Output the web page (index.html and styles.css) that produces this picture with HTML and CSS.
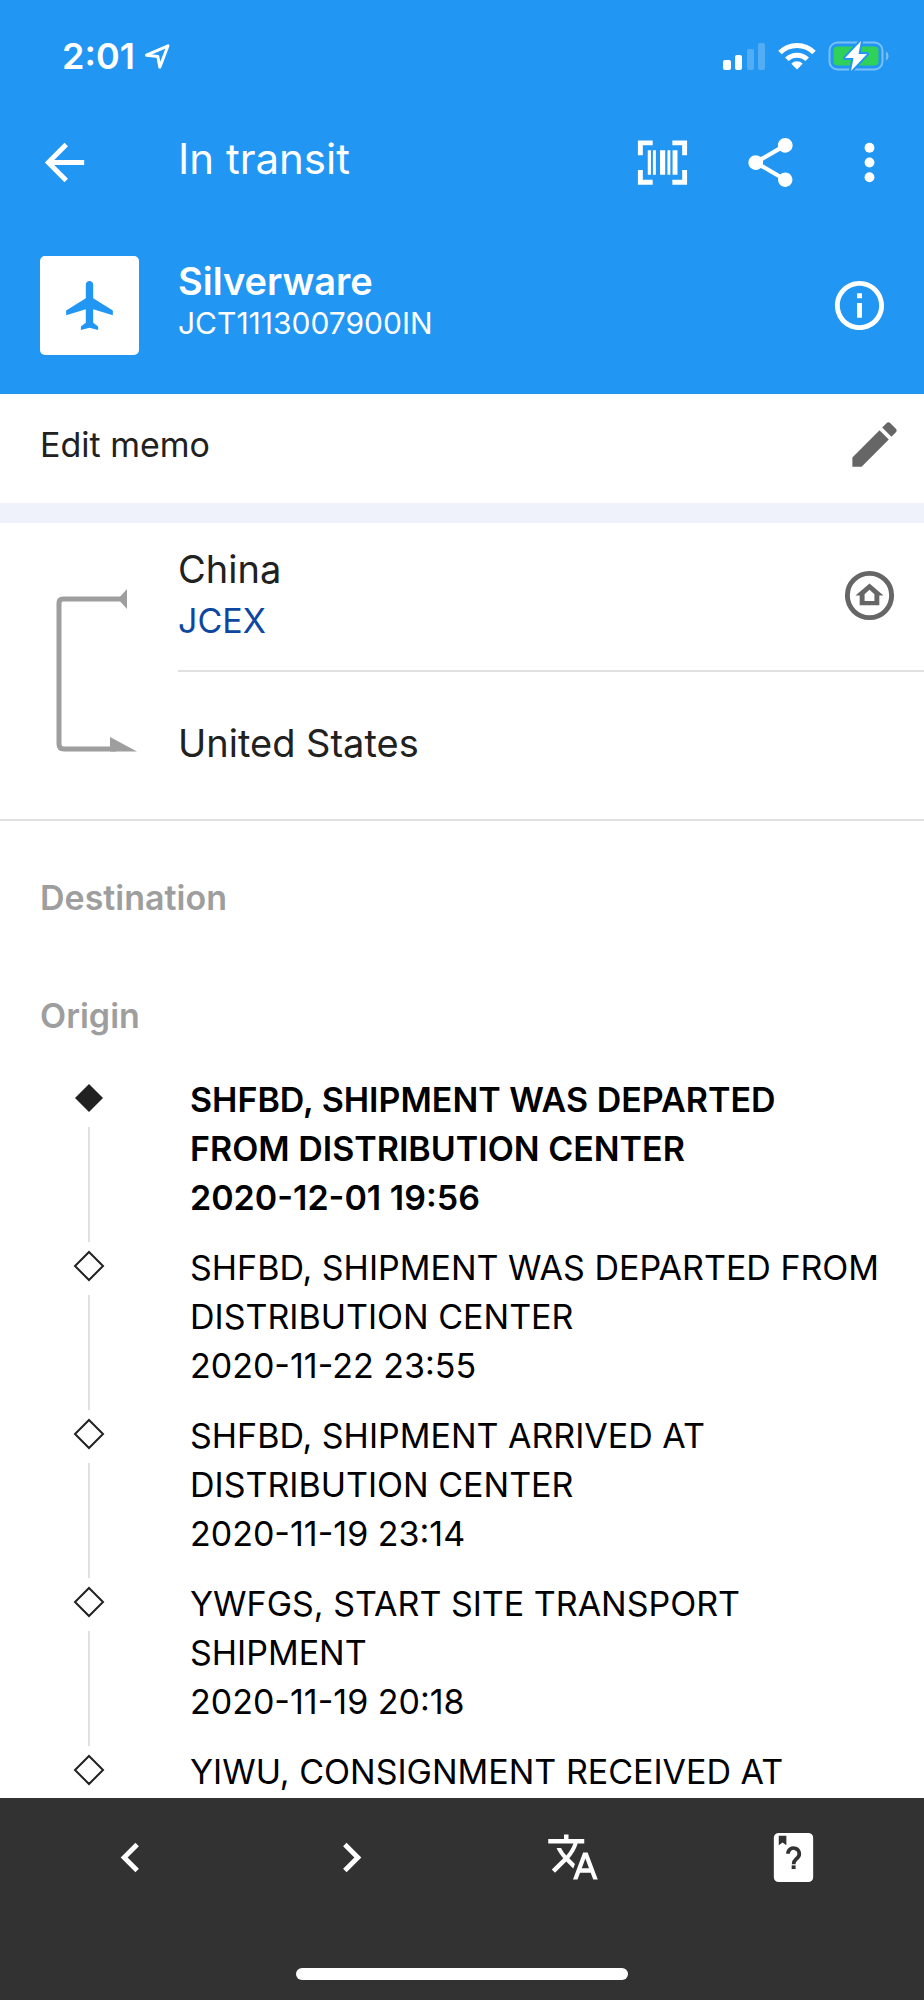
FILE: index.html
```html
<!DOCTYPE html>
<html lang="en">
<head>
<meta charset="utf-8">
<meta name="viewport" content="width=device-width, initial-scale=1">
<title>In transit</title>
<link rel="stylesheet" href="styles.css">
</head>
<body>
<div class="app">
  <header class="header">
    <div class="status">
      <span class="status-time">2:01</span>
      <svg class="status-location" viewBox="0 0 27 27" aria-hidden="true"><path d="M2.5 12.2 24 2.8 15.8 24.2 13.8 13.4z"/></svg>
      <div class="status-right">
        <svg class="status-signal" viewBox="0 0 43 28" aria-hidden="true">
          <rect x="0" y="18" width="8" height="10" rx="2"/>
          <rect x="12" y="13" width="7" height="15" rx="2"/>
          <g opacity=".22"><rect x="24" y="7" width="7" height="21" rx="2"/><rect x="35" y="1" width="7" height="27" rx="2"/></g>
        </svg>
        <svg class="status-wifi" viewBox="0 0 38 28" aria-hidden="true">
          <path class="wifi-arc" d="M2 10.5a24.3 24.3 0 0 1 34 0M8.800 17.300a14.600 14.600 0 0 1 20.400 0"/>
          <path d="M13.300 21.700a8 8 0 0 1 11.400 0L19 27.600z"/>
        </svg>
        <svg class="status-battery" viewBox="0 0 62 30" aria-hidden="true">
          <rect class="battery-case" x="1.5" y="1.5" width="53" height="27" rx="8"/>
          <path class="battery-cap" d="M58 10.5c3.3 1.5 3.3 7.5 0 9z"/>
          <rect class="battery-fill" x="5.5" y="5.5" width="45" height="19" rx="4"/>
          <path class="battery-bolt" d="M33 0 17 17h8.5L23 30 39 13h-8.5z"/>
        </svg>
      </div>
    </div>

    <div class="appbar">
      <button class="icon-btn" type="button" aria-label="Back">
        <svg class="icon" viewBox="0 0 24 24"><path d="M20 11H7.830l5.590-5.590L12 4l-8 8 8 8 1.410-1.410L7.830 13H20z"/></svg>
      </button>
      <h1 class="appbar-title">In transit</h1>
      <div class="appbar-actions">
        <button class="icon-btn" type="button" aria-label="Scan barcode">
          <svg class="icon" viewBox="0 0 24 24"><path d="M2 3h6v2H4v4H2zM16 3h6v6h-2V5h-4zM2 15h2v4h4v2H2zM20 15h2v6h-6v-2h4zM6 7h1.300v10H6zM8.100 7h1.200v10H8.100zM11 7h2.100v10H11zM14 7h1.200v10H14zM16.100 7h2v10h-2z"/></svg>
        </button>
        <button class="icon-btn" type="button" aria-label="Share">
          <svg class="icon" viewBox="0 0 24 24"><path d="M18 16.080c-.76 0-1.440.3-1.960.77L8.910 12.700c.05-.23.09-.46.09-.7s-.04-.47-.09-.7l7.050-4.110c.54.5 1.250.81 2.040.81 1.660 0 3-1.340 3-3s-1.340-3-3-3-3 1.340-3 3c0 .24.04.47.09.7L8.040 9.810C7.500 9.310 6.790 9 6 9c-1.660 0-3 1.340-3 3s1.340 3 3 3c.79 0 1.500-.31 2.040-.81l7.120 4.160c-.05.21-.08.43-.08.65 0 1.610 1.310 2.920 2.920 2.920s2.920-1.310 2.920-2.920-1.310-2.920-2.920-2.920z"/></svg>
        </button>
      </div>
      <button class="icon-btn" type="button" aria-label="More options">
        <svg class="icon" viewBox="0 0 24 24"><circle cx="12" cy="6" r="2"/><circle cx="12" cy="12" r="2"/><circle cx="12" cy="18" r="2"/></svg>
      </button>
    </div>

    <div class="shipment">
      <div class="shipment-badge">
        <svg class="icon" viewBox="0 0 23 24" aria-hidden="true"><path d="M21 16v-2l-8-5V3.500c0-.83-.67-1.500-1.500-1.500S10 2.670 10 3.500V9l-8 5v2l8-2.500V19l-2 1.500V22l3.500-1 3.500 1v-1.500L13 19v-5.500z"/></svg>
      </div>
      <div class="shipment-text">
        <h2 class="shipment-name">Silverware</h2>
        <p class="shipment-number">JCT1113007900IN</p>
      </div>
      <button class="icon-btn" type="button" aria-label="Shipment details">
        <svg class="icon" viewBox="0 0 24 24"><path d="M11 7h2v2h-2zm0 4h2v6h-2zm1-9C6.480 2 2 6.480 2 12s4.480 10 10 10 10-4.480 10-10S17.520 2 12 2zm0 18c-4.410 0-8-3.590-8-8s3.590-8 8-8 8 3.590 8 8-3.590 8-8 8z"/></svg>
      </button>
    </div>
  </header>

  <main class="content">
    <button class="memo" type="button">
      <span>Edit memo</span>
      <svg class="icon" viewBox="0 0 24 24" aria-hidden="true"><path d="M3 17.250V21h3.750L17.810 9.940l-3.750-3.750zM20.710 7.040c.39-.39.39-1.020 0-1.410l-2.340-2.340c-.39-.39-1.020-.39-1.410 0l-1.830 1.830 3.750 3.750z"/></svg>
    </button>

    <section class="route">
      <svg class="route-line" viewBox="0 0 82 164" aria-hidden="true">
        <path class="route-stroke" d="M66 10H7Q3 10 3 14V155Q3 160 8 160H60"/>
        <path d="M62 10 71 0V20zM54 148 81 162.500H54z"/>
      </svg>
      <div class="route-stops">
        <div class="stop stop-origin">
          <div>
            <p class="stop-name">China</p>
            <a class="stop-carrier" href="#jcex">JCEX</a>
          </div>
          <button class="icon-btn" type="button" aria-label="Carrier website">
            <svg class="icon" viewBox="0 0 24 24"><circle class="ring" cx="12" cy="12" r="9"/><path fill-rule="evenodd" d="M12 7.100 17.700 12H16v4H8v-4H6.300zM12 9.700 10 11.500V14.200h4v-2.700z"/></svg>
          </button>
        </div>
        <div class="stop stop-destination"><p class="stop-name">United States</p></div>
      </div>
    </section>

    <section class="tracking">
      <h3 class="tracking-title">Destination</h3>
      <h3 class="tracking-title">Origin</h3>
      <ol class="events">
        <li class="event event-latest">
          <svg class="event-mark" viewBox="0 0 32 32" aria-hidden="true"><path d="M16 2 30 16 16 30 2 16z"/></svg>
          <div class="event-text"><p>SHFBD, SHIPMENT WAS DEPARTED FROM DISTRIBUTION CENTER</p><time datetime="2020-12-01T19:56">2020-12-01 19:56</time></div>
        </li>
        <li class="event">
          <svg class="event-mark" viewBox="0 0 32 32" aria-hidden="true"><path d="M16 2 30 16 16 30 2 16z"/></svg>
          <div class="event-text"><p>SHFBD, SHIPMENT WAS DEPARTED FROM DISTRIBUTION CENTER</p><time datetime="2020-11-22T23:55">2020-11-22 23:55</time></div>
        </li>
        <li class="event">
          <svg class="event-mark" viewBox="0 0 32 32" aria-hidden="true"><path d="M16 2 30 16 16 30 2 16z"/></svg>
          <div class="event-text"><p>SHFBD, SHIPMENT ARRIVED AT DISTRIBUTION CENTER</p><time datetime="2020-11-19T23:14">2020-11-19 23:14</time></div>
        </li>
        <li class="event">
          <svg class="event-mark" viewBox="0 0 32 32" aria-hidden="true"><path d="M16 2 30 16 16 30 2 16z"/></svg>
          <div class="event-text"><p>YWFGS, START SITE TRANSPORT SHIPMENT</p><time datetime="2020-11-19T20:18">2020-11-19 20:18</time></div>
        </li>
        <li class="event">
          <svg class="event-mark" viewBox="0 0 32 32" aria-hidden="true"><path d="M16 2 30 16 16 30 2 16z"/></svg>
          <div class="event-text"><p>YIWU, CONSIGNMENT RECEIVED AT</p></div>
        </li>
      </ol>
    </section>
  </main>

  <footer class="footer">
    <nav class="toolbar">
      <button class="icon-btn" type="button" aria-label="Previous">
        <svg class="icon" viewBox="0 0 24 24"><path d="M15.410 7.410 14 6l-6 6 6 6 1.410-1.410L10.830 12z"/></svg>
      </button>
      <button class="icon-btn" type="button" aria-label="Next">
        <svg class="icon" viewBox="0 0 24 24"><path d="M10 6 8.590 7.410 13.170 12l-4.580 4.590L10 18l6-6z"/></svg>
      </button>
      <button class="icon-btn" type="button" aria-label="Translate">
        <svg class="icon icon-small" viewBox="0 0 24 24"><path d="M12.870 15.070l-2.540-2.510.03-.03c1.740-1.940 2.980-4.170 3.710-6.530H17V4h-7V2H8v2H1v1.990h11.170C11.500 7.920 10.440 9.750 9 11.350 8.070 10.320 7.300 9.190 6.690 8h-2c.73 1.630 1.730 3.170 2.980 4.560l-5.090 5.020L4 19l5-5 3.110 3.110zM18.500 10h-2L12 22h2l1.120-3h4.750L21 22h2zm-2.620 7l1.620-4.330L19.120 17z"/></svg>
      </button>
      <button class="icon-btn" type="button" aria-label="Help">
        <svg class="icon" viewBox="0 0 24 24"><path fill-rule="evenodd" d="M6 2h12a2 2 0 0 1 2 2v16a2 2 0 0 1-2 2H6a2 2 0 0 1-2-2V4a2 2 0 0 1 2-2zM6 3.200V7l1.550-1.100L9.100 7V3.200z"/><path class="help-hook" d="M9.750 10.500a2.300 2.300 0 1 1 4 1.500c-.8.9-1.700 1.200-1.700 2.700"/><rect class="help-dot" x="11.250" y="15.200" width="1.600" height="1.500"/></svg>
      </button>
    </nav>
    <div class="home-indicator"></div>
  </footer>
</div>
</body>
</html>
```
FILE: styles.css
```css
* {
  box-sizing: border-box;
}

body {
  margin: 0;
  background: #fff;
  color: #212121;
  font-family: Inter, "Liberation Sans", sans-serif;
  font-size: 34px;
}

h1, h2, h3, p, ol {
  margin: 0;
  padding: 0;
  font-size: inherit;
}

ol {
  list-style: none;
}

button {
  border: 0;
  padding: 0;
  background: none;
  color: inherit;
  font: inherit;
  text-align: left;
  cursor: pointer;
}

svg {
  display: block;
  flex: none;
  fill: currentColor;
}

.icon {
  width: 59px;
  height: 59px;
}

.icon-small {
  width: 54px;
  height: 54px;
}

.icon-btn {
  display: flex;
  flex: none;
  align-items: center;
  justify-content: center;
}

.app {
  display: flex;
  flex-direction: column;
  height: 100vh;
}

/* Header */

.header {
  flex: none;
  background: #2196f3;
  color: #fff;
}

.status {
  display: flex;
  align-items: center;
  height: 112px;
  padding: 0 34px 0 62px;
}

.status-time {
  font-size: 36px;
  font-weight: 600;
}

.status-location {
  width: 27px;
  height: 27px;
  margin-left: 9px;
  fill: none;
  stroke: currentColor;
  stroke-width: 3;
  stroke-linejoin: round;
}

.status-right {
  display: flex;
  align-items: center;
  gap: 12px;
  margin-left: auto;
}

.status-signal {
  width: 43px;
  height: 28px;
}

.status-wifi {
  width: 38px;
  height: 28px;
}

.wifi-arc {
  fill: none;
  stroke: currentColor;
  stroke-width: 5;
}

.status-battery {
  width: 62px;
  height: 30px;
}

.battery-case {
  fill: none;
  stroke: currentColor;
  stroke-width: 2;
  opacity: .4;
}

.battery-cap {
  opacity: .4;
}

.battery-fill {
  fill: #30d158;
}

.battery-bolt {
  stroke: #2196f3;
  stroke-width: 4;
  stroke-linejoin: round;
  paint-order: stroke;
}

.appbar {
  display: flex;
  align-items: center;
  height: 101px;
  padding: 0 25px 0 35px;
}

.appbar-title {
  flex: 1;
  padding: 0 0 8px 84px;
  font-size: 42px;
  font-weight: 400;
}

.appbar-actions {
  display: flex;
  gap: 49px;
  margin-right: 40px;
}

.shipment {
  display: flex;
  align-items: center;
  padding: 43px 35px 39px 40px;
}

.shipment-badge {
  display: flex;
  align-items: center;
  justify-content: center;
  width: 99px;
  height: 99px;
  border-radius: 5px;
  background: #fff;
  color: #2196f3;
}

.shipment-text {
  flex: 1;
  padding: 0 0 8px 39px;
  line-height: 42px;
}

.shipment-name {
  font-size: 38px;
  font-weight: 600;
}

.shipment-number {
  font-size: 30px;
}

/* Scrolling content */

.content {
  flex: 1;
  min-height: 0;
  overflow-y: auto;
  scrollbar-width: none;
}

.memo {
  display: flex;
  align-items: center;
  justify-content: space-between;
  width: 100%;
  height: 129px;
  padding: 0 20px 8px 40px;
  border-bottom: 20px solid #eff2fa;
}

.memo .icon,
.stop .icon {
  color: #666;
}

.route {
  display: flex;
  align-items: center;
  border-bottom: 2px solid #e0e0e0;
}

.route-line {
  width: 82px;
  height: 164px;
  margin: 0 40px 0 56px;
  color: #9e9e9e;
}

.route-stroke {
  fill: none;
  stroke: currentColor;
  stroke-width: 5;
}

.route-stops {
  flex: 1;
}

.stop {
  display: flex;
  align-items: center;
  justify-content: space-between;
  padding-right: 25px;
  line-height: 52px;
}

.stop-origin {
  padding-top: 20px;
  padding-bottom: 23px;
  border-bottom: 2px solid #e0e0e0;
}

.stop-destination {
  padding-top: 45px;
  padding-bottom: 50px;
}

.stop-name {
  font-size: 38px;
}

.stop-carrier {
  display: block;
  color: #0d47a1;
  text-decoration: none;
}

.ring {
  fill: none;
  stroke: currentColor;
  stroke-width: 2;
}

.tracking {
  padding-top: 18px;
}

.tracking-title {
  padding: 39px 40px;
  color: #9e9e9e;
  font-weight: 600;
  line-height: 40px;
}

.events {
  color: #000;
  line-height: 49px;
}

.event {
  display: grid;
  grid-template-columns: 32px 1fr;
  grid-template-rows: 45px 1fr;
  column-gap: 68px;
  padding: 0 44px 0 73px;
}

.event + .event {
  padding-top: 21px;
}

.event-mark {
  grid-area: 1 / 1;
  width: 32px;
  height: 32px;
  margin-top: 7px;
  fill: none;
  stroke: #212121;
  stroke-width: 2;
}

/* Connector between two neighbouring marks */
.event::before {
  content: "";
  grid-area: 2 / 1;
  justify-self: center;
  width: 2px;
  margin: 7px 0 -20px;
  background: #e0e0e0;
}

.event:last-child::before {
  display: none;
}

.event-text {
  grid-area: 1 / 2 / span 2;
  padding-left: 17px;
}

.event-latest {
  font-weight: 600;
}

.event-latest .event-mark {
  fill: #212121;
  stroke: none;
}

/* Footer */

.footer {
  flex: none;
  padding-bottom: 20px;
  background: #323232;
  color: #fff;
}

.toolbar {
  display: grid;
  grid-template-columns: repeat(4, 1fr);
  height: 118px;
  padding: 0 20px;
}

.help-hook {
  fill: none;
  stroke: #323232;
  stroke-width: 1.5;
}

.help-dot {
  fill: #323232;
}

.home-indicator {
  width: 36%;
  height: 12px;
  margin: 52px auto 0;
  border-radius: 6px;
  background: #fff;
}
```
